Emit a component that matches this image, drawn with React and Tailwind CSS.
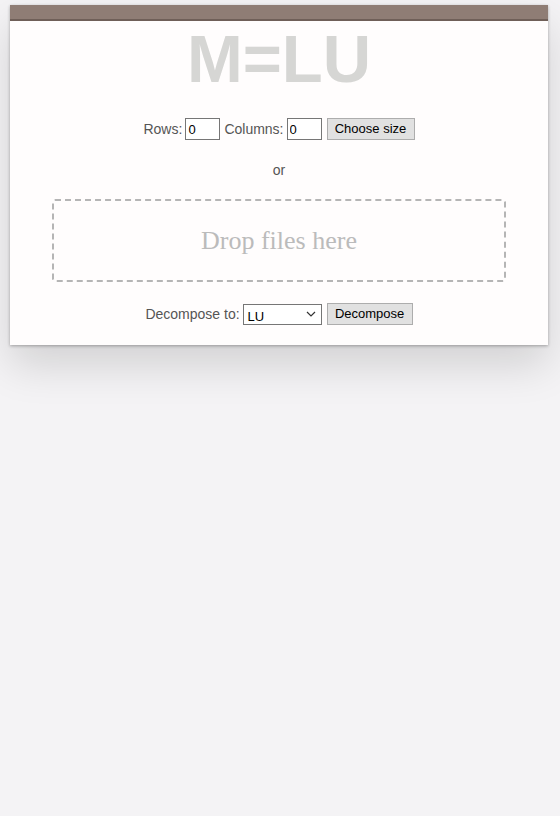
export default function App() {
  return (
    <div className="min-h-[816px] w-full bg-[#f4f3f5] pt-[5px]" style={{ fontFamily: '"Liberation Sans", Arial, sans-serif' }}>
      <div className="mx-[10px] w-[538px] bg-[#fffdfd] shadow-[0_1px_3px_rgba(0,0,0,0.3),0_20px_40px_rgba(0,0,0,0.14)]">
        <div className="h-[16px] border-b-2 border-[#6f5f58] bg-[#8f7d75]" />
        <div className="flex flex-col items-center pb-[20px]">
          <h1 className="mt-[3px] h-[70px] text-[67px] font-bold leading-[70px] text-[#d6d6d4]">M=LU</h1>
          <div className="mt-[24px] flex items-center gap-[3px] text-[14px] text-[#555]">
            <span>Rows:</span>
            <input defaultValue="0" className="h-[22px] w-[35px] border border-[#767676] bg-white px-[2px] text-[13px] text-black" />
            <span className="ml-[1px]">Columns:</span>
            <input defaultValue="0" className="h-[22px] w-[35px] border border-[#767676] bg-white px-[2px] text-[13px] text-black" />
            <button className="ml-[2px] h-[22px] w-[88px] border border-[#adadad] bg-[#e1e1e1] text-[13px] text-black">Choose size</button>
          </div>
          <div className="mt-[20px] text-[14px] text-[#555]">or</div>
          <div className="mt-[18px] flex h-[83px] w-[454px] items-center justify-center rounded-[3px] border-2 border-dashed border-[#b5b5b5]">
            <span className="text-[26px] text-[#bbb]" style={{ fontFamily: '"Liberation Serif", "Times New Roman", serif' }}>Drop files here</span>
          </div>
          <div className="mt-[21px] flex items-center gap-[3px] text-[14px] text-[#555]">
            <span>Decompose to:</span>
            <div className="relative h-[21px] w-[79px] border border-[#767676] bg-white">
              <span className="absolute left-[4px] top-[2px] text-[13px] text-black">LU</span>
              <svg className="absolute right-[5px] top-[6px]" width="10" height="7" viewBox="0 0 10 7" fill="none" stroke="#333" strokeWidth="1.2">
                <path d="M1 1l4 4 4-4" />
              </svg>
            </div>
            <button className="ml-[2px] h-[22px] w-[86px] border border-[#adadad] bg-[#e1e1e1] text-[13px] text-black">Decompose</button>
          </div>
        </div>
      </div>
    </div>
  );
}
